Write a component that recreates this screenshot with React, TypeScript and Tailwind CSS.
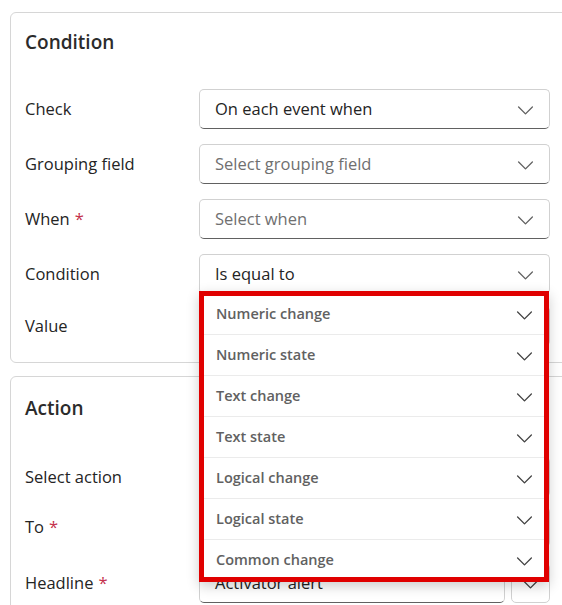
import React from "react";

const font = { fontFamily: '"Open Sans", "Noto Sans", sans-serif' };

function Chevron({ className = "" }: { className?: string }) {
  return (
    <svg width="25" height="25" viewBox="0 0 20 20" className={className} fill="currentColor">
      <path d="M15.85 7.65c.2.2.2.5 0 .7l-5.46 5.49a.55.55 0 0 1-.78 0L4.15 8.35a.5.5 0 1 1 .7-.7L10 12.8l5.15-5.16c.2-.2.5-.2.7 0Z" />
    </svg>
  );
}

function Label({ text, req }: { text: string; req?: boolean }) {
  return (
    <div className="w-[174px] shrink-0 text-[16.5px] text-[#242424]">
      {text}
      {req && <span className="ml-[5px] text-[#c4314b]">*</span>}
    </div>
  );
}

function Dropdown({ value, placeholder }: { value?: string; placeholder?: string }) {
  return (
    <div className="flex h-[40px] w-[351px] items-center justify-between rounded-[5px] border border-[#d1d1d1] border-b-[#616161] bg-white pl-[15px] pr-[11px]">
      <span className={`text-[16.5px] ${value ? "text-[#242424]" : "text-[#707070]"}`}>{value ?? placeholder ?? ""}</span>
      <Chevron className="text-[#616161]" />
    </div>
  );
}

function Row({ children, className = "" }: { children: React.ReactNode; className?: string }) {
  return <div className={`flex h-[40px] items-center ${className}`}>{children}</div>;
}

const items = [
  "Numeric change",
  "Numeric state",
  "Text change",
  "Text state",
  "Logical change",
  "Logical state",
  "Common change",
];

export default function App() {
  return (
    <div className="relative h-[605px] w-[562px] overflow-hidden bg-white" style={font}>
      {/* Condition card */}
      <div className="ml-[10px] mt-[12px] w-[600px] rounded-[6px] border border-[#d6d6d6] px-[14px] pb-[16px] pt-[15px]">
        <div className="h-[28px] text-[19px] font-semibold leading-[28px] text-[#2b2b2b]">Condition</div>
        <div className="mt-[33px] flex flex-col gap-[15px]">
          <Row>
            <Label text="Check" />
            <Dropdown value="On each event when" />
          </Row>
          <Row>
            <Label text="Grouping field" />
            <Dropdown placeholder="Select grouping field" />
          </Row>
          <Row>
            <Label text="When" req />
            <Dropdown placeholder="Select when" />
          </Row>
          <Row>
            <Label text="Condition" />
            <Dropdown value="Is equal to" />
          </Row>
          <Row className="-mt-[3px]">
            <Label text="Value" />
            <div className="h-[40px] w-[351px] rounded-[5px] border border-[#d1d1d1] border-b-[#616161] bg-white" />
          </Row>
        </div>
      </div>

      {/* Action card */}
      <div className="ml-[10px] mt-[13px] w-[600px] rounded-[6px] border border-[#d6d6d6] px-[14px] pb-[16px] pt-[17px]">
        <div className="h-[28px] text-[19px] font-semibold leading-[28px] text-[#2b2b2b]">Action</div>
        <div className="mt-[35px] flex flex-col">
          <Row>
            <Label text="Select action" />
            <Dropdown />
          </Row>
          <Row className="mt-[10px]">
            <Label text="To" req />
            <div className="h-[40px] w-[351px] rounded-[5px] border border-[#d1d1d1] border-b-[#616161] bg-white" />
          </Row>
          <Row className="mt-[16px]">
            <Label text="Headline" req />
            <div className="flex w-[351px] gap-[6px]">
              <div className="flex h-[40px] flex-1 items-center rounded-[5px] border border-[#d1d1d1] border-b-[#616161] bg-white pl-[15px]">
                <span className="text-[16.5px] text-[#242424]">Activator alert</span>
              </div>
              <div className="flex h-[40px] w-[39px] items-center justify-center rounded-[5px] border border-[#d1d1d1] bg-white">
                <Chevron className="text-[#424242]" />
              </div>
            </div>
          </Row>
        </div>
      </div>

      {/* Dropdown popup with highlight */}
      <div className="absolute left-[199px] top-[291px] h-[291px] w-[350px] border-[5px] border-[#e00000] bg-white shadow-[0_4px_12px_rgba(0,0,0,0.2)]">
        <div className="h-full w-full overflow-hidden">
          <div className="-mt-[2px]">
            {items.map((t) => (
              <div
                key={t}
                className="flex h-[41px] items-center justify-between border-b border-[#ebebeb] pl-[12px] pr-[7px]"
              >
                <span className="text-[14.5px] font-semibold text-[#616161]">{t}</span>
                <Chevron className="text-[#424242]" />
              </div>
            ))}
          </div>
        </div>
      </div>
    </div>
  );
}
